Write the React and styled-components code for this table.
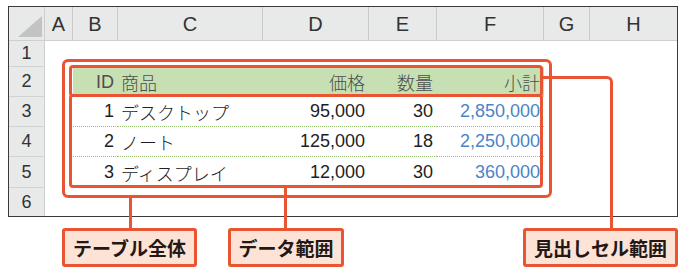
import React from "react";
import styled, { createGlobalStyle } from "styled-components";

const ORANGE = "#e95532";

const GlobalStyle = createGlobalStyle`
  html, body { margin: 0; padding: 0; background: #ffffff; }
  body { font-family: "Liberation Sans", "Noto Sans CJK JP", sans-serif; }
`;

const Page = styled.div`
  position: relative;
  width: 690px;
  height: 278px;
  padding: 6px 0 0 8px;
  box-sizing: border-box;
  overflow: hidden;
`;

const Sheet = styled.div`
  display: grid;
  grid-template-columns: 36px 28px 45px 145px 106px 68px 107px 46px 87px;
  grid-template-rows: 34px 26px 30px 30px 30px 31px 28px;
  width: 670px;
  box-sizing: border-box;
  border: 1px solid #3a3a3a;
  background: #ffffff;
`;

const Corner = styled.div`
  position: relative;
  background: #e8e9e9;
  border-right: 1px solid #cfcfcf;
  border-bottom: 1px solid #cfcfcf;
  &::after {
    content: "";
    position: absolute;
    right: 2px;
    bottom: 3px;
    width: 24px;
    height: 21px;
    background: #c3c3c3;
    clip-path: polygon(100% 0, 100% 100%, 0 100%);
  }
`;

const ColHead = styled.div`
  background: #e8e9e9;
  border-right: ${(p) => (p.$last ? "none" : "1px solid #cacaca")};
  border-bottom: 1px solid #cfcfcf;
  display: flex;
  align-items: center;
  justify-content: center;
  font-size: 20px;
  color: #333333;
  padding-top: 1px;
`;

const RowHead = styled.div`
  background: #e8e9e9;
  border-right: 1px solid #cfcfcf;
  border-bottom: ${(p) => (p.$last ? "none" : "1px solid #d2d2d2")};
  display: flex;
  align-items: center;
  justify-content: center;
  font-size: 18px;
  color: #333333;
`;

const Cell = styled.div`
  box-sizing: border-box;
  display: flex;
  align-items: center;
  justify-content: ${(p) => (p.$align === "left" ? "flex-start" : "flex-end")};
  padding: ${(p) => (p.$align === "left" ? "0 0 0 3px" : "0 4px 0 0")};
  font-size: 18px;
  font-weight: 300;
  white-space: nowrap;
  color: ${(p) => (p.$head ? "#4d4d4d" : p.$blue ? "#4a84c8" : "#1e1e24")};
  background: ${(p) => (p.$head ? "#c6e0b4" : "transparent")};
  border-bottom: ${(p) => (p.$dotted ? "1px dotted #97c274" : "none")};
`;

const Frame = styled.div`
  position: absolute;
  left: ${(p) => p.$x}px;
  top: ${(p) => p.$y}px;
  width: ${(p) => p.$w}px;
  height: ${(p) => p.$h}px;
  box-sizing: border-box;
  border: 3px solid ${ORANGE};
  border-radius: ${(p) => p.$r}px;
  pointer-events: none;
`;

const Leader = styled.div`
  position: absolute;
  left: ${(p) => p.$x}px;
  top: ${(p) => p.$y}px;
  width: 3px;
  height: ${(p) => p.$h}px;
  background: ${ORANGE};
`;

const Elbow = styled.div`
  position: absolute;
  left: ${(p) => p.$x}px;
  top: ${(p) => p.$y}px;
  width: ${(p) => p.$w}px;
  height: ${(p) => p.$h}px;
  box-sizing: border-box;
  border-top: 3px solid ${ORANGE};
  border-right: 3px solid ${ORANGE};
  border-top-right-radius: 6px;
`;

const LabelRow = styled.div`
  display: flex;
  margin-top: 11px;
`;

const Label = styled.div`
  box-sizing: border-box;
  width: ${(p) => p.$w}px;
  height: 39px;
  margin-left: ${(p) => p.$gap}px;
  border: 3px solid ${ORANGE};
  border-radius: 3px;
  background: #fde3d5;
  display: flex;
  align-items: center;
  justify-content: center;
  font-family: "Noto Sans CJK JP", sans-serif;
  font-weight: 700;
  font-size: 19px;
  color: #231815;
  position: relative;
  z-index: 1;
`;

const cols = ["A", "B", "C", "D", "E", "F", "G", "H"];

const rows = [
  { id: "1", name: "デスクトップ", price: "95,000", qty: "30", sub: "2,850,000" },
  { id: "2", name: "ノート", price: "125,000", qty: "18", sub: "2,250,000" },
  { id: "3", name: "ディスプレイ", price: "12,000", qty: "30", sub: "360,000" },
];

const Empty = () => <Cell />;

export default function App() {
  return (
    <>
      <GlobalStyle />
      <Page>
        <Sheet>
          <Corner />
          {cols.map((c, i) => (
            <ColHead key={c} $last={i === cols.length - 1}>
              {c}
            </ColHead>
          ))}

          <RowHead>1</RowHead>
          {cols.map((c) => (
            <Empty key={"r1" + c} />
          ))}

          <RowHead>2</RowHead>
          <Empty />
          <Cell $head>ID</Cell>
          <Cell $head $align="left">商品</Cell>
          <Cell $head>価格</Cell>
          <Cell $head>数量</Cell>
          <Cell $head>小計</Cell>
          <Empty />
          <Empty />

          {rows.map((r, i) => {
            const dotted = i < rows.length - 1;
            return (
              <React.Fragment key={r.id}>
                <RowHead>{i + 3}</RowHead>
                <Empty />
                <Cell $dotted={dotted}>{r.id}</Cell>
                <Cell $dotted={dotted} $align="left">
                  {r.name}
                </Cell>
                <Cell $dotted={dotted}>{r.price}</Cell>
                <Cell $dotted={dotted}>{r.qty}</Cell>
                <Cell $dotted={dotted} $blue>
                  {r.sub}
                </Cell>
                <Empty />
                <Empty />
              </React.Fragment>
            );
          })}

          <RowHead $last>6</RowHead>
          {cols.map((c) => (
            <Empty key={"r6" + c} />
          ))}
        </Sheet>

        <LabelRow>
          <Label $w={135} $gap={54}>テーブル全体</Label>
          <Label $w={116} $gap={31}>データ範囲</Label>
          <Label $w={155} $gap={179}>見出しセル範囲</Label>
        </LabelRow>

        <Frame $x={62} $y={59} $w={490} $h={139} $r={6} />
        <Frame $x={69} $y={65} $w={474} $h={32} $r={4} />
        <Frame $x={69} $y={94} $w={474} $h={94} $r={4} />
        <Leader $x={129} $y={197} $h={32} />
        <Leader $x={284} $y={186} $h={43} />
        <Elbow $x={542} $y={76} $w={71} $h={153} />
      </Page>
    </>
  );
}
